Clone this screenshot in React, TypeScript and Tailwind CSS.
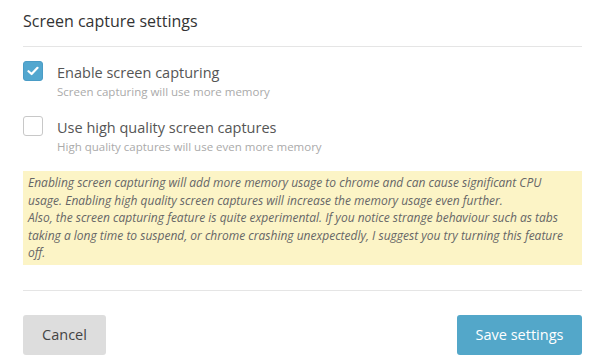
// Screen capture settings panel
const font = { fontFamily: '"Open Sans", "Liberation Sans", sans-serif' };

function Checkbox({ checked }: { checked: boolean }) {
  if (checked) {
    return (
      <span className="flex h-[20px] w-[20px] shrink-0 items-center justify-center rounded-[3px] border border-[#4a9cc6] bg-[#53a7cf]">
        <svg width="12" height="10" viewBox="0 0 12 10" fill="none">
          <path d="M1.5 5.2 L4.6 8 L10.5 1.8" stroke="white" strokeWidth="2.2" strokeLinecap="round" strokeLinejoin="round" />
        </svg>
      </span>
    );
  }
  return <span className="block h-[20px] w-[20px] shrink-0 rounded-[3px] border border-[#c8c8c8] bg-white" />;
}

function Option({ checked, label, hint }: { checked: boolean; label: string; hint: string }) {
  return (
    <div className="flex items-start gap-[14px]">
      <div className="w-[20px] shrink-0">
        <Checkbox checked={checked} />
      </div>
      <div>
        <div className="text-[14.5px] leading-[24px] text-[#555]">{label}</div>
        <div className="text-[11.5px] leading-[14px] text-[#aaa]">{hint}</div>
      </div>
    </div>
  );
}

export default function App() {
  return (
    <div className="h-[364px] w-[600px] bg-white pl-[23px] pr-[18px]" style={font}>
      <h2 className="pt-[9px] pb-[13px] text-[16px] leading-[24px] text-[#333]">Screen capture settings</h2>
      <div className="border-t border-[#e5e5e5]" />
      <div className="flex flex-col gap-[17px] pt-[14px]">
        <Option checked label="Enable screen capturing" hint="Screen capturing will use more memory" />
        <Option checked={false} label="Use high quality screen captures" hint="High quality captures will use even more memory" />
      </div>
      <div className="mt-[17px] bg-[#fcf4c6] px-[5px] py-[3px] text-[12px] italic leading-[17.5px] text-[#666]">
        Enabling screen capturing will add more memory usage to chrome and can cause significant CPU usage. Enabling high
        quality screen captures will increase the memory usage even further.
        <br />
        Also, the screen capturing feature is quite experimental. If you notice strange behaviour such as tabs taking a long
        time to suspend, or chrome crashing unexpectedly, I suggest you try turning this feature off.
      </div>
      <div className="mt-[25px] border-t border-[#e5e5e5]" />
      <div className="flex justify-between pt-[24px]">
        <button className="h-[40px] w-[83px] rounded-[3px] bg-[#dddddd] text-[14.5px] text-[#444]">Cancel</button>
        <button className="h-[40px] w-[125px] rounded-[3px] bg-[#53a7c9] text-[14.5px] text-white">Save settings</button>
      </div>
    </div>
  );
}
